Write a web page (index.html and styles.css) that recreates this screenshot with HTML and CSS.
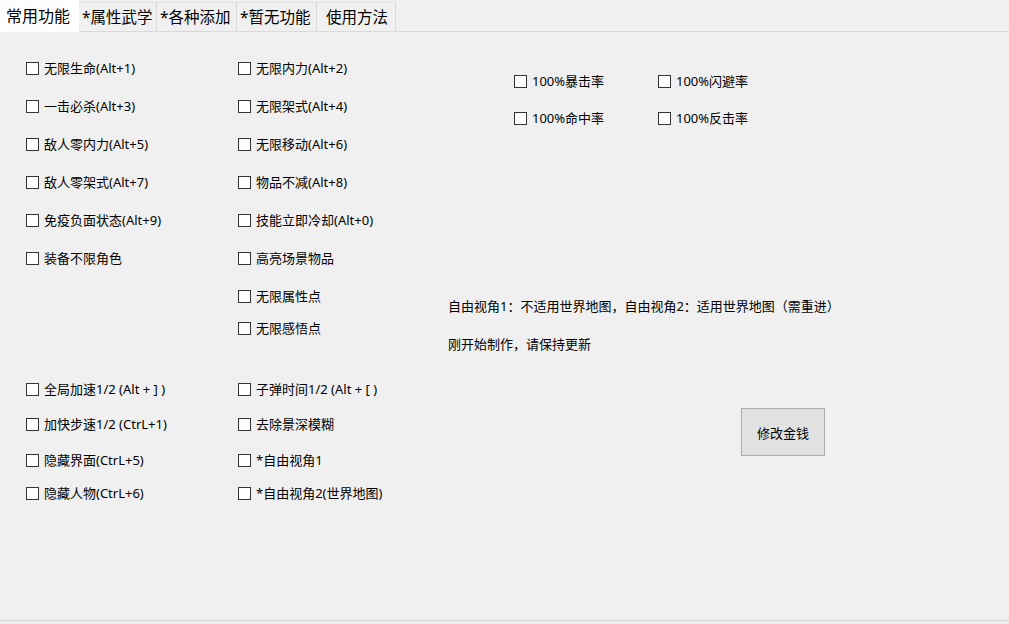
FILE: index.html
```html
<!DOCTYPE html>
<html lang="zh">
<head>
<meta charset="utf-8">
<link rel="stylesheet" href="styles.css">
</head>
<body>
<div class="tabs">
  <div class="tab active">常用功能</div>
  <div class="tab">*属性武学</div>
  <div class="tab">*各种添加</div>
  <div class="tab">*暂无功能</div>
  <div class="tab">使用方法</div>
</div>
<div class="panel">
  <div class="grid">
    <label class="chk r1 c1"><span class="box"></span>无限生命(Alt+1)</label>
    <label class="chk r1 c2"><span class="box"></span>无限内力(Alt+2)</label>
    <label class="chk r2 c1"><span class="box"></span>一击必杀(Alt+3)</label>
    <label class="chk r2 c2"><span class="box"></span>无限架式(Alt+4)</label>
    <label class="chk r3 c1"><span class="box"></span>敌人零内力(Alt+5)</label>
    <label class="chk r3 c2"><span class="box"></span>无限移动(Alt+6)</label>
    <label class="chk r4 c1"><span class="box"></span>敌人零架式(Alt+7)</label>
    <label class="chk r4 c2"><span class="box"></span>物品不减(Alt+8)</label>
    <label class="chk r5 c1"><span class="box"></span>免疫负面状态(Alt+9)</label>
    <label class="chk r5 c2"><span class="box"></span>技能立即冷却(Alt+0)</label>
    <label class="chk r6 c1"><span class="box"></span>装备不限角色</label>
    <label class="chk r6 c2"><span class="box"></span>高亮场景物品</label>
    <label class="chk r7 c2"><span class="box"></span>无限属性点</label>
    <label class="chk r8 c2"><span class="box"></span>无限感悟点</label>
    <label class="chk r9 c1"><span class="box"></span>全局加速1/2 (Alt + ] )</label>
    <label class="chk r9 c2"><span class="box"></span>子弹时间1/2 (Alt + [ )</label>
    <label class="chk r10 c1"><span class="box"></span>加快步速1/2 (CtrL+1)</label>
    <label class="chk r10 c2"><span class="box"></span>去除景深模糊</label>
    <label class="chk r11 c1"><span class="box"></span>隐藏界面(CtrL+5)</label>
    <label class="chk r11 c2"><span class="box"></span>*自由视角1</label>
    <label class="chk r12 c1"><span class="box"></span>隐藏人物(CtrL+6)</label>
    <label class="chk r12 c2"><span class="box"></span>*自由视角2(世界地图)</label>
  </div>
  <div class="right">
    <div class="rates">
      <label class="chk"><span class="box"></span>100%暴击率</label>
      <label class="chk"><span class="box"></span>100%闪避率</label>
      <label class="chk"><span class="box"></span>100%命中率</label>
      <label class="chk"><span class="box"></span>100%反击率</label>
    </div>
    <p class="note note1">自由视角1：不适用世界地图，自由视角2：适用世界地图（需重进）</p>
    <p class="note note2">刚开始制作，请保持更新</p>
    <button class="btn">修改金钱</button>
  </div>
</div>
</body>
</html>
```
FILE: styles.css
```css
html, body {
  margin: 0;
  padding: 0;
  background: #f0f0f0;
  width: 1009px;
  height: 624px;
  overflow: hidden;
  font-family: "Noto Sans", "Noto Sans CJK SC", sans-serif;
  color: #000;
}

.tabs {
  display: flex;
  height: 31px;
  align-items: flex-end;
  border-bottom: 1px solid #d9d9d9;
}

.tab {
  box-sizing: border-box;
  height: 29px;
  padding: 0 4px 0 3px;
  font-size: 15.5px;
  line-height: 28px;
  border-right: 1px solid #d9d9d9;
  border-top: 1px solid #e3e3e3;
  background: #f0f0f0;
  white-space: nowrap;
}

.tab.active {
  height: 32px;
  margin-bottom: -1px;
  width: 79px;
  padding: 0 0 0 6px;
  line-height: 32px;
  background: #fff;
  border: none;
  font-size: 16px;
}

.tab:nth-child(2) { width: 78px; }
.tab:nth-child(3) { width: 80px; }
.tab:nth-child(4) { width: 80px; }
.tab:nth-child(5) { width: 79px; padding-left: 9px; }

.panel {
  box-sizing: border-box;
  height: 589px;
  border-bottom: 1px solid #d0d0d0;
  display: flex;
  padding-top: 27px;
  padding-left: 26px;
}

.grid {
  display: grid;
  grid-template-columns: 212px 210px;
  grid-template-rows: 38px 38px 38px 38px 38px 38px 32px 61px 35px 36px 33px 18px;
}

.chk {
  display: flex;
  align-items: center;
  height: 18px;
  font-size: 13px;
  line-height: 18px;
  white-space: nowrap;
}

.box {
  box-sizing: border-box;
  width: 13px;
  height: 13px;
  border: 1px solid #333;
  background: #fff;
  margin-right: 5px;
  flex: none;
}

.c1 { grid-column: 1; }
.c2 { grid-column: 2; }
.r1 { grid-row: 1; } .r2 { grid-row: 2; } .r3 { grid-row: 3; } .r4 { grid-row: 4; }
.r5 { grid-row: 5; } .r6 { grid-row: 6; } .r7 { grid-row: 7; } .r8 { grid-row: 8; }
.r9 { grid-row: 9; } .r10 { grid-row: 10; } .r11 { grid-row: 11; } .r12 { grid-row: 12; }

.right {
  display: flex;
  flex-direction: column;
  align-items: flex-start;
}

.rates {
  display: grid;
  grid-template-columns: 144px 144px;
  grid-template-rows: 37px 18px;
  margin-top: 13px;
  margin-left: 66px;
}

.note {
  margin: 0;
  font-size: 13px;
  line-height: 18px;
  white-space: nowrap;
}

.note1 { margin-top: 170px; }
.note2 { margin-top: 20px; }

.btn {
  margin-top: 55px;
  margin-left: 293px;
  width: 84px;
  height: 48px;
  background: #e1e1e1;
  border: 1px solid #adadad;
  font-family: "Noto Sans", "Noto Sans CJK SC", sans-serif;
  font-size: 13px;
  color: #000;
  padding: 0;
}
```
